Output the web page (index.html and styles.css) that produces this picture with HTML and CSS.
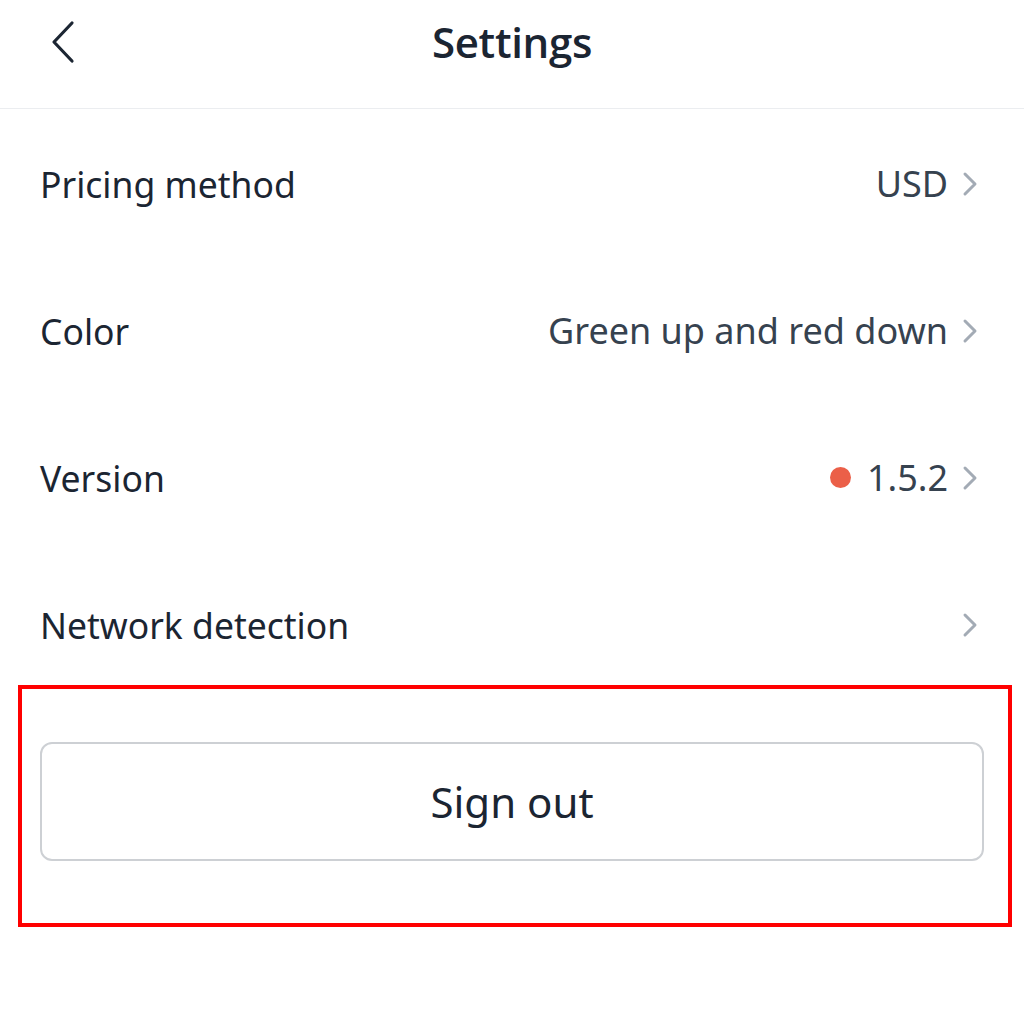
FILE: index.html
```html
<!DOCTYPE html>
<html>
<head>
<meta charset="utf-8">
<link rel="stylesheet" href="styles.css">
</head>
<body>
<div class="page">
  <header class="topbar">
    <svg class="back" width="30" height="44" viewBox="0 0 30 44"><path d="M24 3 L6 22 L24 41" fill="none" stroke="#1c2633" stroke-width="3.2" stroke-linecap="round" stroke-linejoin="round"/></svg>
    <h1 class="title">Settings</h1>
  </header>
  <ul class="list">
    <li class="row"><span class="label">Pricing method</span><span class="value">USD<svg class="chev" viewBox="0 0 16 26"><path d="M3 3 L13 13 L3 23" fill="none" stroke="#a3abb5" stroke-width="3" stroke-linecap="round" stroke-linejoin="round"/></svg></span></li>
    <li class="row"><span class="label">Color</span><span class="value">Green up and red down<svg class="chev" viewBox="0 0 16 26"><path d="M3 3 L13 13 L3 23" fill="none" stroke="#a3abb5" stroke-width="3" stroke-linecap="round" stroke-linejoin="round"/></svg></span></li>
    <li class="row"><span class="label">Version</span><span class="value"><span class="dot"></span>1.5.2<svg class="chev" viewBox="0 0 16 26"><path d="M3 3 L13 13 L3 23" fill="none" stroke="#a3abb5" stroke-width="3" stroke-linecap="round" stroke-linejoin="round"/></svg></span></li>
    <li class="row"><span class="label">Network detection</span><span class="value"><svg class="chev" viewBox="0 0 16 26"><path d="M3 3 L13 13 L3 23" fill="none" stroke="#a3abb5" stroke-width="3" stroke-linecap="round" stroke-linejoin="round"/></svg></span></li>
  </ul>
  <div class="highlight">
    <button class="signout">Sign out</button>
  </div>
</div>
</body>
</html>
```
FILE: styles.css
```css
html, body {
  margin: 0;
  padding: 0;
  background: #ffffff;
}
body {
  font-family: "Noto Sans", "Open Sans", sans-serif;
  color: #1b2532;
}
.page {
  width: 1024px;
  height: 1024px;
  overflow: hidden;
}
.topbar {
  height: 108px;
  border-bottom: 1px solid #ebedf0;
  display: flex;
  align-items: center;
  justify-content: center;
  position: relative;
}
.back {
  position: absolute;
  left: 48px;
  top: 20px;
}
.title {
  margin: 0;
  margin-top: -25px;
  font-family: "Open Sans", sans-serif;
  font-weight: 600;
  font-size: 42px;
  color: #1b2532;
  letter-spacing: -0.3px;
}
.list {
  list-style: none;
  margin: 1px 0 0;
  padding: 0;
}
.row {
  height: 147px;
  display: flex;
  align-items: center;
  justify-content: space-between;
  padding: 0 46px 0 40px;
}
.label {
  font-size: 35.5px;
  color: #1b2532;
}
.value {
  display: flex;
  align-items: center;
  font-size: 36px;
  color: #36424f;
}
.chev {
  width: 16px;
  height: 26px;
  margin-left: 14px;
}
.dot {
  width: 21px;
  height: 21px;
  border-radius: 50%;
  background: #eb5f48;
  margin-right: 16px;
}
.highlight {
  margin: -13px 12px 0 18px;
  border: 4px solid #ff0000;
  padding: 53px 24px 0 18px;
  box-sizing: border-box;
  height: 242px;
}
.signout {
  display: block;
  width: 100%;
  height: 119px;
  border: 2px solid #cdd0d4;
  border-radius: 12px;
  background: #ffffff;
  font-family: "Noto Sans", sans-serif;
  font-size: 42px;
  color: #1b2532;
}
```
